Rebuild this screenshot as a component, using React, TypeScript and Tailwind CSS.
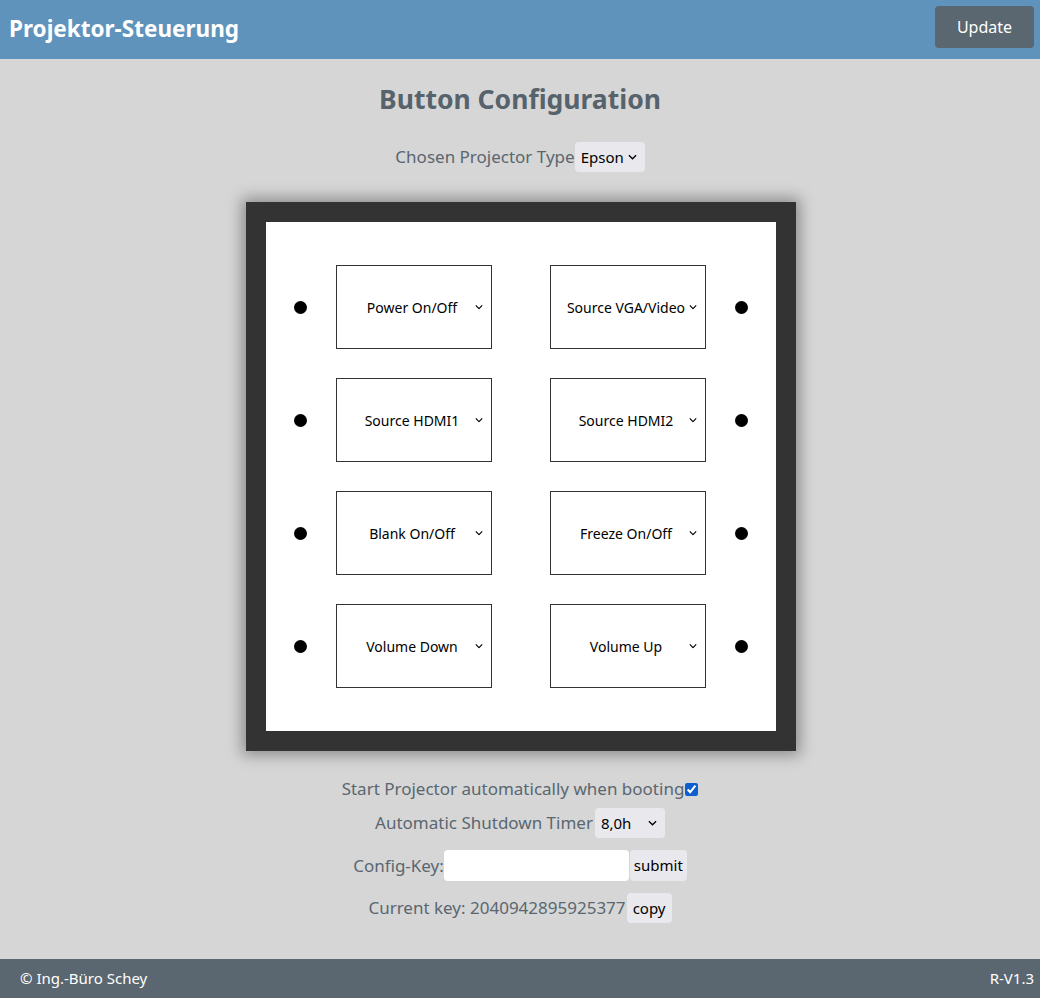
import { useState } from "react";

const BUTTONS: [string, string][] = [
  ["Power On/Off", "Source VGA/Video"],
  ["Source HDMI1", "Source HDMI2"],
  ["Blank On/Off", "Freeze On/Off"],
  ["Volume Down", "Volume Up"],
];

const ALL_COMMANDS = BUTTONS.flat();

function Chevron({ className = "" }: { className?: string }) {
  return (
    <svg
      viewBox="0 0 10 6"
      className={`pointer-events-none absolute top-1/2 -translate-y-1/2 ${className}`}
      fill="none"
      stroke="currentColor"
      strokeWidth="1.4"
    >
      <path d="M1 1l4 4 4-4" />
    </svg>
  );
}

function SmallSelect({ value, options, width }: { value: string; options: string[]; width: string }) {
  const [v, setV] = useState(value);
  return (
    <div className={`relative ${width}`}>
      <select
        value={v}
        onChange={(e) => setV(e.target.value)}
        className="h-[30px] w-full appearance-none rounded-[4px] bg-[#e9e9ed] pl-[6px] text-[15px] text-black outline-none"
      >
        {options.map((o) => (
          <option key={o}>{o}</option>
        ))}
      </select>
      <Chevron className="right-[8px] h-[6px] w-[9px] text-black" />
    </div>
  );
}

function CommandSelect({ value }: { value: string }) {
  const [v, setV] = useState(value);
  return (
    <div className="relative h-[84px] w-[156px]">
      <select
        value={v}
        onChange={(e) => setV(e.target.value)}
        className="h-full w-full appearance-none border border-[#333] bg-white pr-[4px] text-center text-[14px] text-black outline-none [text-align-last:center]"
      >
        {ALL_COMMANDS.map((c) => (
          <option key={c}>{c}</option>
        ))}
      </select>
      <Chevron className="right-[9px] h-[5px] w-[8px] text-black" />
    </div>
  );
}

function Dot() {
  return <div className="h-[13px] w-[13px] rounded-full bg-black" />;
}

export default function App() {
  const [autoStart, setAutoStart] = useState(true);

  return (
    <div
      className="flex min-h-screen flex-col bg-[#d6d6d6] text-[#5a6670]"
      style={{ fontFamily: '"Noto Sans", "Open Sans", sans-serif' }}
    >
      {/* Header */}
      <header className="flex h-[59px] items-center justify-between bg-[#5f93bb] pl-[9px] pr-[6px]">
        <h2 className="pb-[2px] text-[22.5px] font-bold text-white">Projektor-Steuerung</h2>
        <button className="mb-[6px] h-[42px] w-[99px] rounded-[4px] bg-[#5a6670] text-[16px] text-white">Update</button>
      </header>

      {/* Main */}
      <main className="flex flex-1 flex-col items-center pt-[22px]">
        <h1 className="text-[26.5px] font-bold leading-[36px] text-[#56636c]">Button Configuration</h1>

        <div className="mt-[25px] flex items-center text-[17px]">
          <span>Chosen Projector Type</span>
          <SmallSelect value="Epson" options={["Epson", "BenQ", "NEC", "Sony"]} width="w-[70px]" />
        </div>

        {/* Panel */}
        <div className="ml-[2px] mt-[30px] bg-[#333333] p-[20px] shadow-[0_0_14px_4px_rgba(0,0,0,0.35)]">
          <div className="flex w-[510px] flex-col gap-[29px] bg-white px-[28px] py-[43px]">
            {BUTTONS.map(([left, right]) => (
              <div key={left} className="flex items-center">
                <Dot />
                <div className="ml-[29px]">
                  <CommandSelect value={left} />
                </div>
                <div className="ml-[58px]">
                  <CommandSelect value={right} />
                </div>
                <div className="ml-[29px]">
                  <Dot />
                </div>
              </div>
            ))}
          </div>
        </div>

        {/* Settings */}
        <div className="mt-[26px] flex h-[24px] items-center text-[17px]">
          <span>Start Projector automatically when booting</span>
          <input
            type="checkbox"
            checked={autoStart}
            onChange={(e) => setAutoStart(e.target.checked)}
            className="ml-[1px] h-[13px] w-[13px] accent-[#0b5fd0]"
          />
        </div>

        <div className="mt-[7px] flex items-center text-[17px]">
          <span>Automatic Shutdown Timer</span>
          <div className="ml-[2px]">
            <SmallSelect value="8,0h" options={["1,0h", "2,0h", "4,0h", "8,0h", "12,0h"]} width="w-[70px]" />
          </div>
        </div>

        <div className="mt-[12px] flex items-center text-[17px]">
          <span>Config-Key:</span>
          <input type="text" className="h-[31px] w-[185px] rounded-[4px] bg-white px-2 text-[15px] text-black outline-none" />
          <button className="ml-[1px] h-[31px] w-[57px] rounded-[4px] bg-[#e9e9ed] text-[15px] text-black">submit</button>
        </div>

        <div className="mt-[12px] flex items-center text-[17px]">
          <span>Current key: 2040942895925377</span>
          <button className="ml-[1px] h-[30px] w-[45px] rounded-[4px] bg-[#e9e9ed] text-[15px] text-black">copy</button>
        </div>
      </main>

      {/* Footer */}
      <footer className="mt-[36px] flex h-[39px] items-center justify-between bg-[#5a6670] pl-[20px] pr-[6px] text-[15px] text-white">
        <span>© Ing.-Büro Schey</span>
        <span>R-V1.3</span>
      </footer>
    </div>
  );
}
